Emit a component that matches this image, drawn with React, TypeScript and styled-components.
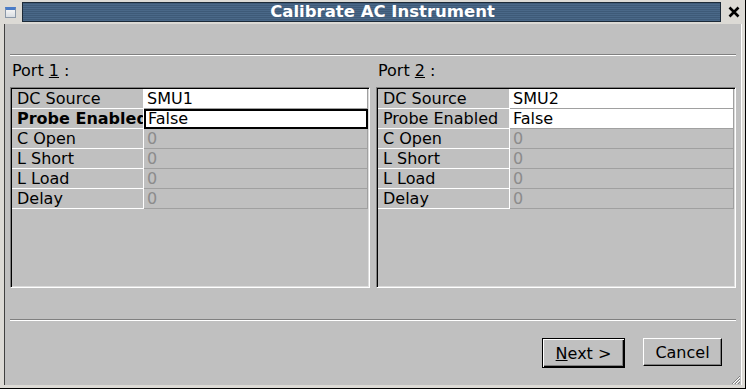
import React from 'react'
import styled, { createGlobalStyle } from 'styled-components'

const GlobalStyle = createGlobalStyle`
    html, body {
        margin: 0;
        padding: 0;
        background: #dcdad5;
        font-family: "DejaVu Sans", "Liberation Sans", sans-serif;
        font-size: 16px;
    }
`

type IRow = {
    label: string
    value: string
    enabled: boolean
}

type IPort = {
    id: number
    source: string
    focused: boolean
}

const Window = styled.div`
    width: 746px;
    height: 389px;
    box-sizing: border-box;
    background: #dcdad5;
    border-right: 1px solid #000;
    border-bottom: 1px solid #000;
    display: flex;
    flex-direction: column;
    padding: 2px 3px 3px 4px;
`

const TitleBar = styled.div`
    height: 20px;
    display: flex;
    align-items: center;
    gap: 5px;
    margin-bottom: 2px;
`

const MenuIcon = styled.div`
    width: 11px;
    height: 11px;
    margin-left: 1px;
    box-sizing: border-box;
    border: 1px solid #8a98a8;
    border-top: 3px solid #4a7cc8;
    background: linear-gradient(#f4f4f4, #d8dde2);
`

const Title = styled.div`
    flex: 1;
    height: 20px;
    box-sizing: border-box;
    border: 1px solid #1c2a38;
    background: repeating-linear-gradient(
        to bottom,
        #3e5a78 0px,
        #3e5a78 1px,
        #4a6888 1px,
        #4a6888 2px
    );
    color: #fff;
    font-weight: bold;
    font-size: 16.5px;
    text-align: center;
    line-height: 18px;
    margin-left: 1px;
    padding-left: 22px;
`

const CloseButton = styled.div`
    width: 16px;
    height: 18px;
    display: flex;
    align-items: center;
    justify-content: center;
`

const Client = styled.div`
    flex: 1;
    background: #c0c0c0;
    border-left: 1px solid #404040;
    border-right: 1px solid #ffffff;
    display: flex;
    flex-direction: column;
    padding: 0 5px 0 5px;
    position: relative;
`

const Separator = styled.div<{ $top: number }>`
    margin-top: ${p => p.$top}px;
    height: 0;
    border-top: 1px solid #808080;
    border-bottom: 1px solid #ffffff;
`

const Ports = styled.div`
    display: flex;
    gap: 6px;
    margin-top: 5px;
`

const PortPanel = styled.div`
    flex: 1;
    display: flex;
    flex-direction: column;
`

const PortLabel = styled.div`
    color: #000;
    height: 19px;
    line-height: 19px;
    padding-left: 2px;
    margin-bottom: 7px;

    & u {
        text-decoration: underline;
    }
`

const Grid = styled.div`
    height: 201px;
    box-sizing: border-box;
    border-top: 1px solid #808080;
    border-left: 1px solid #808080;
    border-right: 1px solid #ffffff;
    border-bottom: 1px solid #ffffff;
    box-shadow: inset 1px 1px 0 #000, inset -1px -1px 0 #dcdcdc;
    padding: 1px;
`

const Row = styled.div`
    display: flex;
    height: 20px;
`

const LabelCell = styled.div<{ $bold: boolean }>`
    width: 132px;
    flex-shrink: 0;
    box-sizing: border-box;
    padding-left: 5px;
    line-height: 19px;
    border-right: 1px solid #ffffff;
    border-bottom: 1px solid #ffffff;
    font-weight: ${p => (p.$bold ? 'bold' : 'normal')};
    white-space: nowrap;
    overflow: hidden;
    color: #000;
`

const ValueCell = styled.div<{ $kind: 'white' | 'focus' | 'disabled' }>`
    flex: 1;
    box-sizing: border-box;
    padding-left: ${p => (p.$kind === 'focus' ? 2 : 3)}px;
    line-height: ${p => (p.$kind === 'focus' ? 16 : 19)}px;
    background: ${p => (p.$kind === 'disabled' ? '#c0c0c0' : '#ffffff')};
    color: ${p => (p.$kind === 'disabled' ? '#8c8c8c' : '#000')};
    border-right: 1px solid #a0a0a0;
    border-bottom: 1px solid #a0a0a0;
    ${p => p.$kind === 'focus' && `border: 2px solid #000;`}
`

const Footer = styled.div`
    display: flex;
    justify-content: flex-end;
    gap: 18px;
    margin-top: 17px;
    padding-right: 14px;
`

const Button = styled.div<{ $default?: boolean }>`
    height: ${p => (p.$default ? 30 : 28)}px;
    box-sizing: border-box;
    display: flex;
    align-items: center;
    justify-content: center;
    color: #000;
    font-size: 16px;
    background: #c0c0c0;
    ${p =>
        p.$default
            ? `
        width: 83px;
        border: 1px solid #000;
        box-shadow: inset 1px 1px 0 #fff, inset -1px -1px 0 #000, inset -2px -2px 0 #808080;
    `
            : `
        width: 79px;
        border-top: 1px solid #fff;
        border-left: 1px solid #fff;
        border-right: 1px solid #000;
        border-bottom: 1px solid #000;
        box-shadow: inset -1px -1px 0 #808080;
    `}
`

const Grip = styled.svg`
    position: absolute;
    right: 0;
    bottom: 0;
`

const rowsFor = (port: IPort): IRow[] => [
    { label: 'DC Source', value: port.source, enabled: true },
    { label: 'Probe Enabled', value: 'False', enabled: true },
    { label: 'C Open', value: '0', enabled: false },
    { label: 'L Short', value: '0', enabled: false },
    { label: 'L Load', value: '0', enabled: false },
    { label: 'Delay', value: '0', enabled: false },
]

const ports: IPort[] = [
    { id: 1, source: 'SMU1', focused: true },
    { id: 2, source: 'SMU2', focused: false },
]

const PortView = ({ port }: { port: IPort }) => (
    <PortPanel>
        <PortLabel>
            Port <u>{port.id}</u> :
        </PortLabel>
        <Grid>
            {rowsFor(port).map((row, i) => {
                const focus = port.focused && i === 1
                const kind = !row.enabled ? 'disabled' : focus ? 'focus' : 'white'
                return (
                    <Row key={row.label}>
                        <LabelCell $bold={focus}>{row.label}</LabelCell>
                        <ValueCell $kind={kind}>{row.value}</ValueCell>
                    </Row>
                )
            })}
        </Grid>
    </PortPanel>
)

export default function App() {
    return (
        <>
            <GlobalStyle />
            <Window>
                <TitleBar>
                    <MenuIcon />
                    <Title>Calibrate AC Instrument</Title>
                    <CloseButton>
                        <svg width="12" height="12" viewBox="0 0 12 12">
                            <path d="M1.5 1.5 L10.5 10.5 M10.5 1.5 L1.5 10.5" stroke="#000" strokeWidth="2.6" />
                        </svg>
                    </CloseButton>
                </TitleBar>
                <Client>
                    <Separator $top={30} />
                    <Ports>
                        {ports.map(p => (
                            <PortView key={p.id} port={p} />
                        ))}
                    </Ports>
                    <Separator $top={31} />
                    <Footer>
                        <Button $default>
                            <span><u>N</u>ext &gt;</span>
                        </Button>
                        <Button>Cancel</Button>
                    </Footer>
                    <Grip width="12" height="12" viewBox="0 0 12 12">
                        <path d="M11 3 L3 11 M11 6 L6 11 M11 9 L9 11" stroke="#808080" strokeWidth="1" />
                        <path d="M11 4 L4 11 M11 7 L7 11" stroke="#ffffff" strokeWidth="1" />
                    </Grip>
                </Client>
            </Window>
        </>
    )
}
